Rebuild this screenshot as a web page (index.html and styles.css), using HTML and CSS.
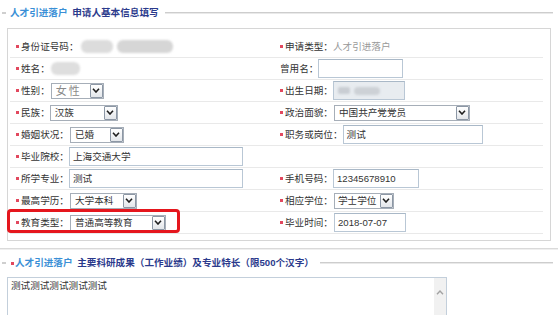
FILE: index.html
```html
<!DOCTYPE html>
<html lang="zh-CN">
<head>
<meta charset="utf-8">
<title>申请人基本信息填写</title>
<link rel="stylesheet" href="styles.css">
</head>
<body>
<div class="page">
  <div class="legend">
    <span class="dash"></span>
    <span class="title"><span class="t1">人才引进落户</span> <span class="t2">申请人基本信息填写</span></span>
    <span class="rule"></span>
  </div>

  <div class="box">
    <div class="grid">
      <div class="cell"><span class="req"></span><span class="lbl">身份证号码：</span><span class="blur b-id1"></span><span class="blur b-id2"></span></div>
      <div class="cell"><span class="req"></span><span class="lbl">申请类型：</span><span class="static">人才引进落户</span></div>

      <div class="cell"><span class="req"></span><span class="lbl">姓名：</span><span class="blur b-name"></span></div>
      <div class="cell"><span class="lbl">曾用名：</span><span class="inp w-alias"></span></div>

      <div class="cell"><span class="req"></span><span class="lbl">性别：</span>
        <span class="sel w-sex"><span class="val val-sex">女性</span><span class="arr"><svg viewBox="0 0 8 5" width="8" height="5"><polyline points="1,0.8 4,4 7,0.8" /></svg></span></span>
      </div>
      <div class="cell"><span class="req"></span><span class="lbl">出生日期：</span><span class="inp w-birth disabled"><span class="blur b-birth1"></span><span class="blur b-birth2"></span></span></div>

      <div class="cell"><span class="req"></span><span class="lbl">民族：</span>
        <span class="sel w-nation"><span class="val">汉族</span><span class="arr"><svg viewBox="0 0 8 5" width="8" height="5"><polyline points="1,0.8 4,4 7,0.8" /></svg></span></span>
      </div>
      <div class="cell"><span class="req"></span><span class="lbl">政治面貌：</span>
        <span class="sel w-party"><span class="val">中国共产党党员</span><span class="arr"><svg viewBox="0 0 8 5" width="8" height="5"><polyline points="1,0.8 4,4 7,0.8" /></svg></span></span>
      </div>

      <div class="cell"><span class="req"></span><span class="lbl">婚姻状况：</span>
        <span class="sel w-marry"><span class="val">已婚</span><span class="arr"><svg viewBox="0 0 8 5" width="8" height="5"><polyline points="1,0.8 4,4 7,0.8" /></svg></span></span>
      </div>
      <div class="cell"><span class="req"></span><span class="lbl">职务或岗位：</span><span class="inp w-job">测试</span></div>

      <div class="cell"><span class="req"></span><span class="lbl">毕业院校：</span><span class="inp w-school">上海交通大学</span></div>
      <div class="cell"></div>

      <div class="cell"><span class="req"></span><span class="lbl">所学专业：</span><span class="inp w-school">测试</span></div>
      <div class="cell"><span class="req"></span><span class="lbl">手机号码：</span><span class="inp w-phone">12345678910</span></div>

      <div class="cell"><span class="req"></span><span class="lbl">最高学历：</span>
        <span class="sel w-edu"><span class="val">大学本科</span><span class="arr"><svg viewBox="0 0 8 5" width="8" height="5"><polyline points="1,0.8 4,4 7,0.8" /></svg></span></span>
      </div>
      <div class="cell"><span class="req"></span><span class="lbl">相应学位：</span>
        <span class="sel w-degree"><span class="val">学士学位</span><span class="arr"><svg viewBox="0 0 8 5" width="8" height="5"><polyline points="1,0.8 4,4 7,0.8" /></svg></span></span>
      </div>

      <div class="cell last hl"><span class="req"></span><span class="lbl">教育类型：</span>
        <span class="sel w-type"><span class="val">普通高等教育</span><span class="arr"><svg viewBox="0 0 8 5" width="8" height="5"><polyline points="1,0.8 4,4 7,0.8" /></svg></span></span>
        <span class="mark"></span>
      </div>
      <div class="cell last"><span class="req"></span><span class="lbl">毕业时间：</span><span class="inp w-grad">2018-07-07</span></div>
    </div>
  </div>

  <div class="sep"></div>

  <div class="legend">
    <span class="dash"></span>
    <span class="req lreq"></span>
    <span class="title"><span class="t1">人才引进落户</span> <span class="t2">主要科研成果（工作业绩）及专业特长（限500个汉字）</span></span>
    <span class="rule"></span>
  </div>

  <div class="ta">
    <span class="ta-text">测试测试测试测试测试</span>
    <span class="sb"><svg viewBox="0 0 8 5" width="8" height="5"><polyline points="1,4.2 4,1 7,4.2" /></svg></span>
  </div>
</div>
</body>
</html>
```

FILE: styles.css
```css
html, body {
  margin: 0;
  padding: 0;
  background: #fff;
}

body {
  font-family: "Liberation Sans", "Noto Sans CJK SC", sans-serif;
  font-size: 9.6px;
  color: #333;
  width: 558px;
  height: 315px;
  overflow: hidden;
}

.page {
  width: 558px;
}

/* legend rows */
.legend {
  display: flex;
  align-items: center;
  height: 26px;
}

.dash {
  width: 4px;
  height: 2px;
  margin-left: 2px;
  background: #cfcfcf;
}

.title {
  margin-left: 4px;
  font-weight: bold;
  white-space: nowrap;
  line-height: 12px;
}

.t1 {
  color: #3a8fd6;
}

.t2 {
  color: #2b3a8c;
  margin-left: 2px;
}

.rule {
  flex: 1;
  height: 1px;
  margin-left: 6px;
  margin-right: 5px;
  border-top: 1px solid #cdcdcd;
  background: #e9e9e9;
}

/* main box */
.box {
  margin-top: 2px;
  margin-left: 7px;
  width: 544px;
  box-sizing: border-box;
  border: 1px solid #d6d6d6;
  padding: 7px 7px 6px 2px;
}

.grid {
  display: grid;
  grid-template-columns: 264px 269px;
}

.cell {
  display: flex;
  align-items: center;
  height: 21px;
  border-bottom: 1px solid #e9e9e9;
  padding-left: 6px;
  white-space: nowrap;
}

.req {
  width: 3px;
  height: 3px;
  background: #e2485e;
  margin-right: 2px;
  flex: none;
}

.lbl {
  color: #333;
  line-height: 12px;
}

.static {
  color: #999;
  line-height: 12px;
}

/* blurred private values */
.blur {
  display: block;
  height: 13px;
  border-radius: 6px;
  background: #dcdcdc;
  filter: blur(1.3px);
}

.b-id1 {
  width: 32px;
  margin-left: 2px;
}

.b-id2 {
  width: 56px;
  margin-left: 4px;
  background: #d6d6d6;
}

.b-name {
  width: 29px;
  margin-left: 1px;
  background: #dedede;
}

.b-birth1 {
  width: 12px;
  height: 7px;
  margin-left: 4px;
  background: #c9cdd3;
  border-radius: 2px;
}

.b-birth2 {
  width: 26px;
  height: 8px;
  margin-left: 4px;
  background: #cdd1d6;
  border-radius: 4px;
}

/* text inputs */
.inp {
  display: flex;
  align-items: center;
  height: 19px;
  box-sizing: border-box;
  border: 1px solid #b9c7d5;
  border-top-color: #a9b8c7;
  padding: 0 3px;
  background: #fff;
  color: #333;
  line-height: 12px;
  flex: none;
}

.inp.disabled {
  background: #e8ecf0;
  padding: 0;
}

.w-alias { width: 85px; }
.w-birth { width: 72px; }
.w-job { width: 140px; }
.w-school { width: 174px; }
.w-phone { width: 86px; }
.w-grad { width: 72px; margin-left: 1px; }

/* selects */
.sel {
  display: flex;
  align-items: center;
  height: 16px;
  box-sizing: border-box;
  border: 1px solid #a6aeb8;
  background: #fff;
  padding-left: 4px;
  margin-left: 1px;
  flex: none;
}

.sel .val {
  flex: 1;
  overflow: hidden;
  color: #333;
  line-height: 12px;
}

.sel .val-sex {
  color: #8a8a8a;
  font-size: 11px;
  letter-spacing: 2px;
  font-weight: normal;
}

.arr {
  width: 13px;
  height: 14px;
  box-sizing: border-box;
  border: 1px solid #8c97a5;
  border-radius: 1px;
  background: linear-gradient(#ffffff, #e3e6ea);
  display: flex;
  align-items: center;
  justify-content: center;
  flex: none;
}

.arr svg polyline {
  fill: none;
  stroke: #1f1f1f;
  stroke-width: 1.6;
}

.w-sex { width: 53px; }
.w-nation { width: 68px; margin-left: 0; }
.w-marry { width: 54px; }
.w-edu { width: 67px; }
.w-type { width: 96px; }
.w-party { width: 136px; }
.w-degree { width: 60px; padding-left: 3px; }

/* highlight annotation */
.hl {
  position: relative;
}

.mark {
  position: absolute;
  left: -3px;
  top: -3px;
  width: 173px;
  height: 24px;
  box-sizing: border-box;
  border: 3px solid #e5161d;
  border-radius: 4px;
}

/* separator between sections */
.sep {
  margin-top: 7px;
  height: 1px;
  border-top: 1px solid #dadada;
  background: #efefef;
}

.lreq {
  margin-left: 5px;
  margin-right: 0;
}

.lreq + .title {
  margin-left: 1px;
}

/* textarea */
.ta {
  position: relative;
  margin-top: 1px;
  margin-left: 7px;
  width: 440px;
  height: 38px;
  box-sizing: border-box;
  border: 1px solid #c3cfdb;
  border-bottom: none;
  padding: 2px 3px;
  line-height: 12px;
  color: #333;
}

.ta-text {
  display: block;
}

.sb {
  position: absolute;
  top: 0;
  right: 0;
  bottom: 0;
  width: 12px;
  background: #f1f1f1;
  display: flex;
  justify-content: center;
  padding-top: 12px;
  box-sizing: border-box;
}

.sb svg polyline {
  fill: none;
  stroke: #a3a3a3;
  stroke-width: 1.4;
}
```
